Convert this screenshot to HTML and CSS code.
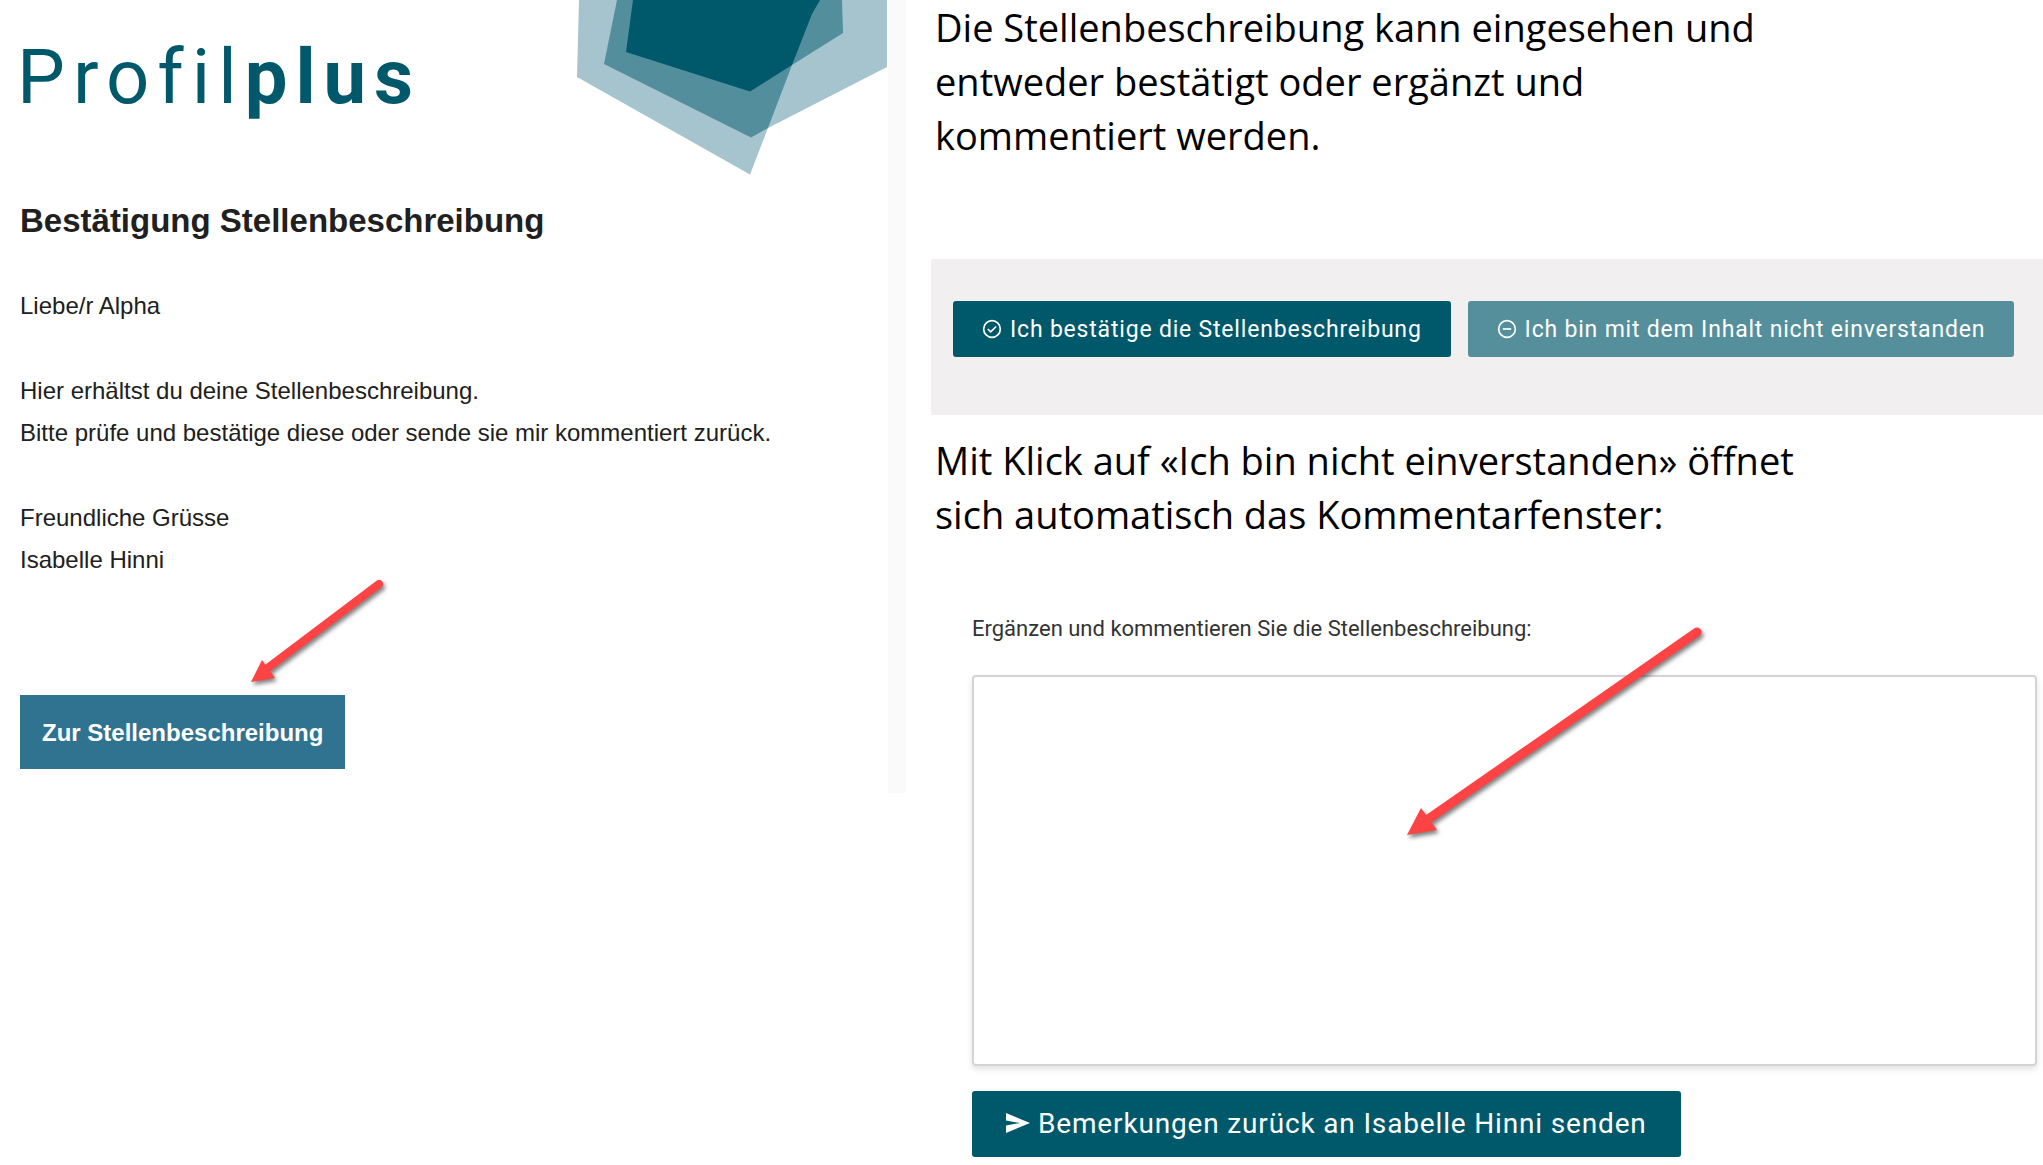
FILE: index.html
```html
<!DOCTYPE html>
<html lang="de">
<head>
<meta charset="utf-8">
<meta name="viewport" content="width=device-width, initial-scale=1">
<title>Profilplus – Bestätigung Stellenbeschreibung</title>
<link rel="stylesheet" href="styles.css">
</head>
<body>
<main class="page">
  <article class="mail">
    <header class="mail-header">
      <div class="logo">Profil<strong>plus</strong></div>
      <svg class="emblem" viewBox="0 0 310 175" aria-hidden="true">
        <path fill="#a6c4cd" d="M2 0 0 77 173 174.500 191 128 310 67V0Z"/>
        <path fill="#538e9c" d="M40 0 27 64 174 137.500 191 128 215 65 266 33 265 0Z"/>
        <path fill="#00586b" d="M56 0 49 52 173 91.500 215 65 235 14 243 0Z"/>
      </svg>
    </header>
    <div class="mail-body">
      <h1 class="mail-title">Bestätigung Stellenbeschreibung</h1>
      <p>Liebe/r Alpha</p>
      <p>Hier erhältst du deine Stellenbeschreibung.<br>Bitte prüfe und bestätige diese oder sende sie mir kommentiert zurück.</p>
      <p>Freundliche Grüsse<br>Isabelle Hinni</p>
      <div class="mail-action">
        <a class="link-button" href="#kommentar">Zur Stellenbeschreibung</a>
        <svg class="arrow arrow-link" viewBox="0 0 140 110" aria-hidden="true">
          <path d="M134 9 20 95" stroke="#fd4344" stroke-width="8" stroke-linecap="round"/>
          <path d="M6 107 17 85 30 103Z" fill="#fd4344"/>
        </svg>
      </div>
    </div>
  </article>

  <section class="guide">
    <p class="note">Die Stellenbeschreibung kann eingesehen und entweder bestätigt oder ergänzt und kommentiert werden.</p>
    <div class="choices">
      <button class="button" type="button">
        <svg class="icon" viewBox="0 0 24 24" fill="none" stroke="currentColor" stroke-width="2" aria-hidden="true"><circle cx="12" cy="12" r="10"/><path d="m7 12 3.500 3.500L17 9"/></svg>
        Ich bestätige die Stellenbeschreibung
      </button>
      <button class="button button-soft" type="button">
        <svg class="icon" viewBox="0 0 24 24" fill="none" stroke="currentColor" stroke-width="2" aria-hidden="true"><circle cx="12" cy="12" r="10"/><path d="M7 12h10"/></svg>
        Ich bin mit dem Inhalt nicht einverstanden
      </button>
    </div>
    <p class="note">Mit Klick auf «Ich bin nicht einverstanden» öffnet sich automatisch das Kommentarfenster:</p>
    <form class="comment">
      <label class="comment-label" for="kommentar">Ergänzen und kommentieren Sie die Stellenbeschreibung:</label>
      <div class="comment-field">
        <textarea class="comment-input" id="kommentar"></textarea>
        <svg class="arrow arrow-field" viewBox="0 0 310 220" aria-hidden="true">
          <path d="M297 12 24 202" stroke="#fd4344" stroke-width="9" stroke-linecap="round"/>
          <path d="M7 215 21 188 37 210Z" fill="#fd4344"/>
        </svg>
      </div>
      <button class="button button-large" type="button">
        <svg class="icon" viewBox="0 0 24 24" fill="currentColor" aria-hidden="true"><path d="M0 2 24 12 0 22V14.500L14 12 0 9.500Z"/></svg>
        Bemerkungen zurück an Isabelle Hinni senden
      </button>
    </form>
  </section>
</main>
</body>
</html>
```
FILE: styles.css
```css
* {
  box-sizing: border-box;
}

body {
  margin: 0;
  background: #fff;
  color: #202020;
  font-family: "Liberation Sans", Arial, sans-serif;
}

p,
h1 {
  margin: 0;
}

.page {
  display: grid;
  grid-template-columns: minmax(0, 906fr) minmax(0, 1137fr);
  align-items: start;
}

/* E-mail */
.mail {
  border-right: 18px solid #fafafa;
  padding-bottom: 24px;
}

.mail-header {
  display: flex;
  justify-content: space-between;
  align-items: flex-start;
  padding-left: 17px;
}

.logo {
  padding-top: 32px;
  color: #00586b;
  font-family: Roboto, sans-serif;
  font-size: 76px;
  font-weight: 400;
  line-height: 90px;
  letter-spacing: 8px;
}

.logo strong {
  font-weight: 700;
}

.emblem {
  width: 310px;
  height: 175px;
  margin-right: 1px;
}

.mail-body {
  display: flex;
  flex-direction: column;
  gap: 43px;
  padding: 25px 20px 0;
  font-size: 24px;
  line-height: 42px;
}

.mail-title {
  font-size: 33px;
  line-height: 42px;
}

.mail-action {
  position: relative;
  padding-top: 71px;
}

.link-button {
  display: inline-block;
  padding: 17px 22px 15px;
  background: #2f7391;
  color: #fff;
  font-weight: 700;
  text-decoration: none;
}

.arrow {
  position: absolute;
  fill: none;
  filter: drop-shadow(2px 3px 2px rgb(0 0 0 / 50%));
  pointer-events: none;
}

.arrow-link {
  top: -49px;
  left: 225px;
  width: 140px;
  height: 110px;
}

/* Guide */
.guide {
  padding-left: 25px;
}

.note {
  max-width: 886px;
  padding-left: 4px;
  color: #000;
  font-family: "Open Sans", sans-serif;
  font-size: 38px;
  line-height: 54px;
}

.choices {
  display: flex;
  align-items: flex-start;
  gap: 17px;
  height: 156px;
  margin: 97px 0 18px;
  padding: 42px 22px;
  background: #f1eff0;
}

.button {
  display: flex;
  align-items: center;
  gap: 8px;
  height: 56px;
  padding: 0 29px;
  border: 0;
  border-radius: 3px;
  background: #00586b;
  color: #fff;
  font-family: Roboto, sans-serif;
  font-size: 23px;
  letter-spacing: 0.035em;
  white-space: nowrap;
}

.button-soft {
  background: #558f9b;
}

.button-large {
  height: 66px;
  padding: 0 34px 2px;
  font-size: 28px;
  letter-spacing: 0.03em;
}

.icon {
  width: 20px;
  height: 20px;
}

.button-large .icon {
  width: 24px;
  height: 24px;
}

.comment {
  display: flex;
  flex-direction: column;
  align-items: flex-start;
  padding: 72px 6px 8px 41px;
}

.comment-label {
  color: #333;
  font-family: Roboto, sans-serif;
  font-size: 22px;
  line-height: 32px;
}

.comment-field {
  position: relative;
  width: 100%;
  margin: 30px 0 25px;
}

.comment-input {
  display: block;
  width: 100%;
  height: 391px;
  border: 2px solid #d4d4d4;
  border-radius: 4px;
  box-shadow: 0 3px 6px rgb(0 0 0 / 12%);
  resize: none;
}

.arrow-field {
  top: -55px;
  left: 428px;
  width: 310px;
  height: 220px;
}
```
